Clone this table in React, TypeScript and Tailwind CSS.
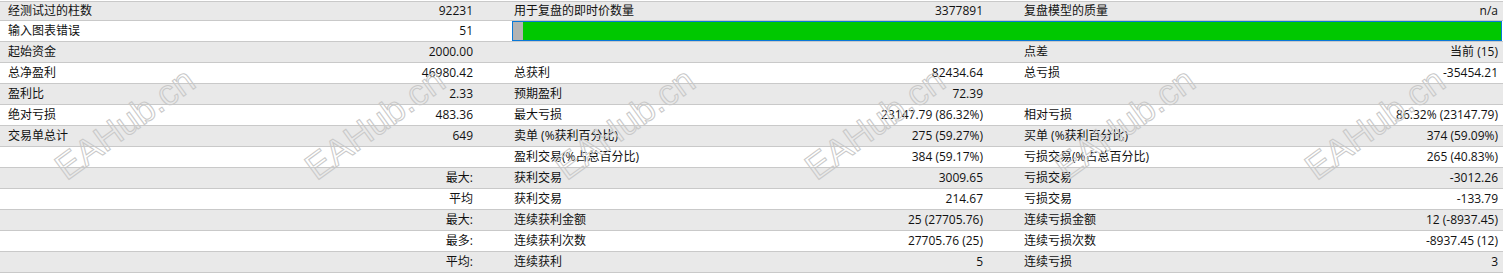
import React from "react";

type Row = {
  l1?: string;
  v1?: string;
  l2?: string;
  v2?: string;
  l3?: string;
  v3?: string;
  bar?: boolean;
};

const rows: Row[] = [
  { l1: "经测试过的柱数", v1: "92231", l2: "用于复盘的即时价数量", v2: "3377891", l3: "复盘模型的质量", v3: "n/a" },
  { l1: "输入图表错误", v1: "51", bar: true },
  { l1: "起始资金", v1: "2000.00", l3: "点差", v3: "当前 (15)" },
  { l1: "总净盈利", v1: "46980.42", l2: "总获利", v2: "82434.64", l3: "总亏损", v3: "-35454.21" },
  { l1: "盈利比", v1: "2.33", l2: "预期盈利", v2: "72.39" },
  { l1: "绝对亏损", v1: "483.36", l2: "最大亏损", v2: "23147.79 (86.32%)", l3: "相对亏损", v3: "86.32% (23147.79)" },
  { l1: "交易单总计", v1: "649", l2: "卖单 (%获利百分比)", v2: "275 (59.27%)", l3: "买单 (%获利百分比)", v3: "374 (59.09%)" },
  { l2: "盈利交易(%占总百分比)", v2: "384 (59.17%)", l3: "亏损交易(%占总百分比)", v3: "265 (40.83%)" },
  { v1: "最大:", l2: "获利交易", v2: "3009.65", l3: "亏损交易", v3: "-3012.26" },
  { v1: "平均", l2: "获利交易", v2: "214.67", l3: "亏损交易", v3: "-133.79" },
  { v1: "最大:", l2: "连续获利金额", v2: "25 (27705.76)", l3: "连续亏损金额", v3: "12 (-8937.45)" },
  { v1: "最多:", l2: "连续获利次数", v2: "27705.76 (25)", l3: "连续亏损次数", v3: "-8937.45 (12)" },
  { v1: "平均:", l2: "连续获利", v2: "5", l3: "连续亏损", v3: "3" },
];

const watermarks = [125, 375, 625, 875, 1125, 1375];

export default function App() {
  return (
    <div
      className="relative w-[1503px] h-[276px] overflow-hidden bg-white text-[12px] leading-[16px] text-[#111]"
      style={{ fontFamily: '"Open Sans", "Noto Sans CJK SC", sans-serif' }}
    >
      <div className="pt-[1px]">
        <div className="border-t border-[#c9c9c9]">
          {rows.map((r, i) => (
            <div
              key={i}
              className={`grid grid-cols-[480px_510px_1fr] border-b border-[#c9c9c9] ${
                i === 0 ? "h-[19px]" : "h-[21px]"
              } ${i % 2 === 0 ? "bg-[#e9e9e9]" : "bg-white"}`}
            >
              <div className="flex items-center justify-between pl-[8px] pr-[7px] whitespace-nowrap">
                <span>{r.l1 ?? ""}</span>
                <span>{r.v1 ?? ""}</span>
              </div>
              {r.bar ? (
                <div className="col-span-2 pl-[32px] pr-[1px] flex items-stretch">
                  <div className="flex-1 flex border border-[#0a78d7]">
                    <div className="w-[10px] bg-[#b3b3b3]" />
                    <div className="flex-1 bg-[#00c800]" />
                  </div>
                </div>
              ) : (
                <>
                  <div className="flex items-center justify-between pl-[34px] pr-[7px] whitespace-nowrap">
                    <span>{r.l2 ?? ""}</span>
                    <span>{r.v2 ?? ""}</span>
                  </div>
                  <div className="flex items-center justify-between pl-[34px] pr-[5px] whitespace-nowrap">
                    <span>{r.l3 ?? ""}</span>
                    <span>{r.v3 ?? ""}</span>
                  </div>
                </>
              )}
            </div>
          ))}
        </div>
      </div>
      {watermarks.map((x) => (
        <div
          key={x}
          className="absolute pointer-events-none whitespace-nowrap text-[36px] leading-[40px] text-transparent [-webkit-text-stroke:1px_#c8c8c8]"
          style={{
            left: x,
            top: 124,
            transform: "translate(-50%, -50%) rotate(-36deg)",
            fontFamily: '"Liberation Sans", Arial, sans-serif',
          }}
        >
          EAHub.cn
        </div>
      ))}
    </div>
  );
}
